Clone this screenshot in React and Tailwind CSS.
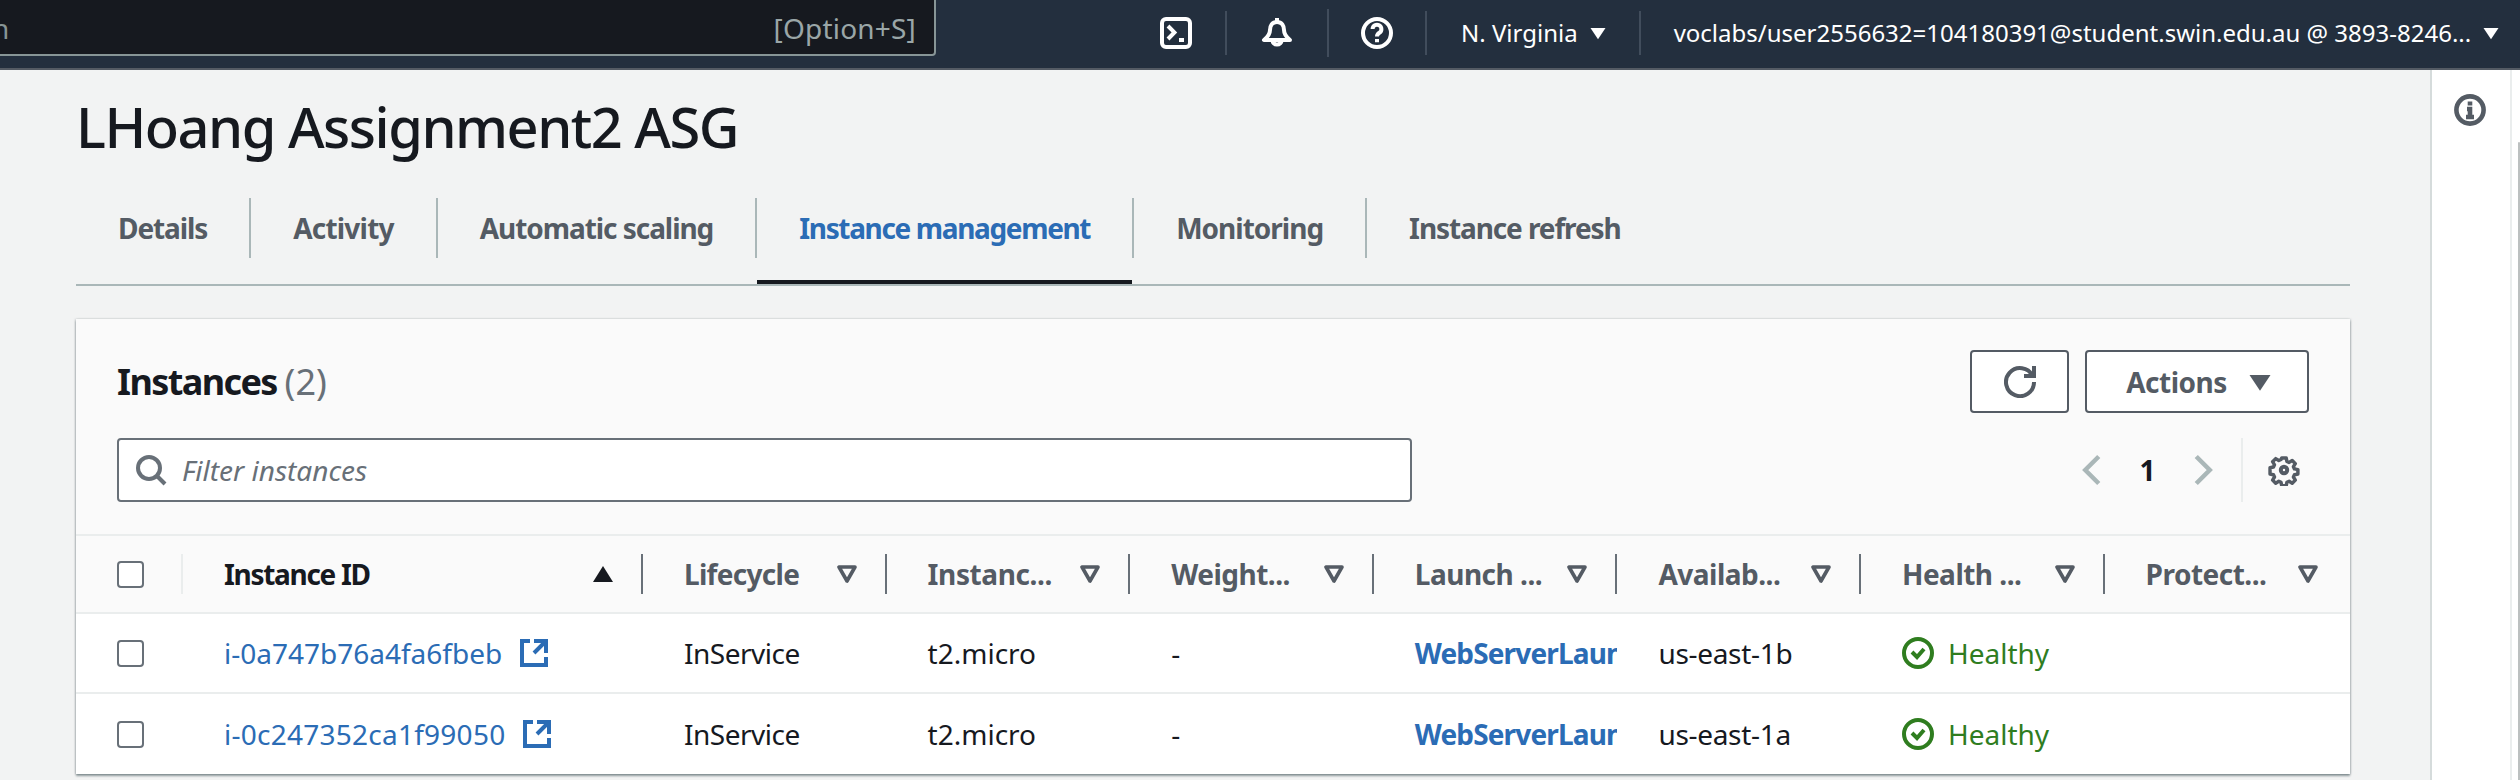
import React from 'react';

const COLUMNS = [
  { label: 'Lifecycle', tracking: 'tracking-[-0.7px]' },
  { label: 'Instanc...', tracking: 'tracking-[-0.4px]' },
  { label: 'Weight...', tracking: 'tracking-[-0.5px]' },
  { label: 'Launch ...', tracking: 'tracking-[-0.5px]' },
  { label: 'Availab...', tracking: 'tracking-[-0.5px]' },
  { label: 'Health ...', tracking: 'tracking-[-0.5px]' },
  { label: 'Protect...', tracking: 'tracking-[-0.5px]' },
];

const ROWS = [
  { id: 'i-0a747b76a4fa6fbeb', zone: 'us-east-1b', tracking: 'tracking-normal' },
  { id: 'i-0c247352ca1f99050', zone: 'us-east-1a', tracking: 'tracking-[0.25px]' },
];

const TABS = [
  { label: 'Details', tracking: 'tracking-[-1.1px]' },
  { label: 'Activity', tracking: 'tracking-[-0.8px]' },
  { label: 'Automatic scaling', tracking: 'tracking-[-1.05px]' },
  { label: 'Instance management', tracking: 'tracking-[-1.35px]', active: true },
  { label: 'Monitoring', tracking: 'tracking-[-1px]' },
  { label: 'Instance refresh', tracking: 'tracking-[-1.1px]' },
];

const Icon = ({ className, children, strokeWidth = 2 }) => (
  <svg viewBox="0 0 16 16" fill="none" stroke="currentColor" strokeWidth={strokeWidth} className={className}>
    {children}
  </svg>
);

const Caret = ({ className }) => (
  <svg viewBox="0 0 16 16" className={className}>
    <path d="M2 4h12l-6 9z" fill="currentColor" />
  </svg>
);

const FilterCaret = () => (
  <svg viewBox="0 0 20 20" className="w-5 h-5 text-[#545b64]" fill="none" stroke="currentColor" strokeWidth="3.6">
    <path d="M2 3h16L10 17z" strokeLinejoin="round" />
  </svg>
);

const Gear = ({ className }) => (
  <Icon className={className}>
    <path
      d="M6.7 1h2.6l.4 2 1.3.6 1.8-1.1 1.8 1.8-1.1 1.8.6 1.3 2 .4v2.6l-2 .4-.6 1.3 1.1 1.8-1.8 1.8-1.8-1.1-1.3.6-.4 2H6.7l-.4-2-1.3-.6-1.8 1.1-1.8-1.8 1.1-1.8-.6-1.3-2-.4V6.7l2-.4.6-1.3-1.1-1.8 1.8-1.8 1.8 1.1 1.3-.6z"
      transform="translate(1.1 1.1) scale(0.86)"
      strokeLinejoin="round"
    />
    <circle cx="8" cy="8" r="1.6" />
  </Icon>
);

const Checkbox = () => <span className="block w-[27px] h-[27px] rounded-[4px] border-2 border-[#687078] bg-white" />;

const HeaderDivider = ({ light }) => (
  <span className={`w-[2px] h-10 shrink-0 ${light ? 'bg-[#eaeded]' : 'bg-[#687078]'}`} />
);

const TopBar = () => (
  <header className="h-[70px] shrink-0 bg-[#232f3e] border-b-2 border-[#545b64] flex items-start text-white">
    <div className="w-[936px] shrink-0 h-[58px] -mt-[2px] pt-[2px] bg-[#16191f] border-2 border-[#879596] border-l-0 rounded-br-[4px] flex items-center justify-between overflow-hidden">
      <span className="text-[28px] text-[#879596] -ml-[8px]">h</span>
      <span className="text-[28px] text-[#9aa6a7] mr-[18px] tracking-[0.2px]">[Option+S]</span>
    </div>
    <div className="flex items-center shrink-0 h-[66px] ml-[224px]">
      <Icon className="w-8 h-8 mr-[33px]">
        <rect x="1" y="1" width="14" height="14" rx="2" />
        <path d="m4 4.5 3.2 3.2L4 11M9.5 11.500H12" />
      </Icon>
      <span className="w-[2px] h-[44px] bg-[#414d5c]" />
      <Icon className="w-8 h-8 mx-[34px]">
        <path d="M8 .500v2" />
        <path d="M8 2.500c-2.500 0-3.500 2-3.500 4 0 2-1 3.400-3 5h13c-2-1.600-3-3-3-5 0-2-1-4-3.500-4z" strokeLinejoin="round" />
        <path d="M5.700 11.500a2.300 2.300 0 1 0 4.600 0" />
      </Icon>
      <span className="w-[2px] h-[48px] bg-[#414d5c]" />
      <Icon className="w-8 h-8 ml-[32px] mr-[32px]">
        <circle cx="8" cy="8" r="7" />
        <path d="M5.800 6a2.200 2.200 0 1 1 3.400 1.900C8.400 8.400 8 8.900 8 9.800M8 11v1.600" />
      </Icon>
      <span className="w-[2px] h-[44px] bg-[#414d5c]" />
      <span className="ml-[34px] text-[24px] leading-none">N. Virginia</span>
      <Caret className="w-5 h-5 ml-[10px] mr-[31px]" />
      <span className="w-[2px] h-[44px] bg-[#414d5c]" />
      <span className="ml-[33px] text-[24px] leading-none whitespace-nowrap">
        voclabs/user2556632=104180391@student.swin.edu.au @ 3893-8246...
      </span>
      <Caret className="w-5 h-5 ml-[10px]" />
    </div>
  </header>
);

const Tabs = () => (
  <nav className="flex h-[88px] border-b-2 border-[#aab7b8] mt-[40px]">
    {TABS.map((tab, i) => (
      <div key={tab.label} className="relative flex items-start h-[86px]">
        <span
          className={`block h-[60px] leading-[60px] text-[28px] font-bold whitespace-nowrap px-[42px] ${tab.tracking} ${
            tab.active ? 'text-[#2b6cb5]' : 'text-[#545b64]'
          } ${i < TABS.length - 1 ? 'border-r-2 border-[#aab7b8]' : ''}`}
        >
          {tab.label}
        </span>
        {tab.active && <span className="absolute left-0 right-[2px] bottom-0 h-1 bg-[#16191f]" />}
      </div>
    ))}
  </nav>
);

const CardHeader = () => (
  <div className="px-[41px] pt-[31px] h-[215px]">
    <div className="flex items-start justify-between h-[88px]">
      <h2 className="text-[36px] leading-[63px] font-bold tracking-[-1.6px] text-[#16191f]">
        Instances <span className="font-normal tracking-normal text-[#687078]">(2)</span>
      </h2>
      <div className="flex gap-4">
        <button className="w-[99px] h-[63px] flex items-center justify-center rounded-[4px] border-2 border-[#545b64] bg-white text-[#545b64]">
          <Icon className="w-8 h-8">
            <path d="M10 5h5V0" />
            <path d="M15 8a7 7 0 1 1-.7-3" />
          </Icon>
        </button>
        <button className="w-[224px] h-[63px] pl-[6px] flex items-center justify-center gap-[19px] rounded-[4px] border-2 border-[#545b64] bg-white text-[#545b64] text-[28px] font-bold tracking-[-0.5px]">
          Actions
          <Caret className="w-7 h-7" />
        </button>
      </div>
    </div>
    <div className="flex items-center">
      <div className="w-[1295px] h-[64px] rounded-[4px] border-2 border-[#687078] bg-white flex items-center pl-4">
        <Icon className="w-8 h-8 text-[#687078]">
          <circle cx="7" cy="7" r="5.500" />
          <path d="m15 15-4-4" />
        </Icon>
        <span className="ml-[15px] text-[28px] italic text-[#687078]">Filter instances</span>
      </div>
      <div className="ml-auto flex items-center h-[64px] pr-[9px]">
        <Icon className="w-9 h-9 text-[#aab7b8]">
          <path d="M11 2 5 8l6 6" />
        </Icon>
        <span className="w-[75px] text-center text-[28px] font-bold text-[#16191f]">1</span>
        <Icon className="w-9 h-9 text-[#aab7b8]">
          <path d="m5 2 6 6-6 6" />
        </Icon>
        <span className="w-[2px] h-[64px] bg-[#eaeded] ml-[20px] mr-[25px]" />
        <Gear className="w-8 h-8 text-[#545b64]" />
      </div>
    </div>
  </div>
);

const TableHead = () => (
  <div className="flex items-center h-[80px] border-y-2 border-[#eaeded] bg-[#fafafa] text-[28px] font-bold text-[#545b64]">
    <div className="w-[107px] shrink-0 flex items-center pl-[41px] justify-between">
      <Checkbox />
      <HeaderDivider light />
    </div>
    <div className="w-[460px] shrink-0 flex items-center justify-between pl-[41px]">
      <span className="text-[#16191f] tracking-[-1.3px]">Instance ID</span>
      <span className="flex items-center gap-[28px]">
        <svg viewBox="0 0 20 20" className="w-5 h-5 text-[#16191f]">
          <path d="M10 2 20 18H0z" fill="currentColor" />
        </svg>
        <HeaderDivider />
      </span>
    </div>
    {COLUMNS.map((col, i) => (
      <div key={col.label} className="w-[243.600px] shrink-0 flex items-center justify-between pl-[41px]">
        <span className={`whitespace-nowrap ${col.tracking}`}>{col.label}</span>
        <span className="flex items-center gap-[28px]">
          <FilterCaret />
          {i < COLUMNS.length - 1 ? <HeaderDivider /> : <span className="w-[2px] h-10" />}
        </span>
      </div>
    ))}
  </div>
);

const TableRow = ({ row, last }) => (
  <div className={`flex items-center text-[28px] text-[#16191f] bg-white ${last ? 'h-[80px]' : 'h-[80px] border-b-2 border-[#eaeded]'}`}>
    <div className="w-[107px] shrink-0 pl-[41px]">
      <Checkbox />
    </div>
    <div className={`w-[460px] shrink-0 flex items-center pl-[41px] text-[#2b6cb5] ${row.tracking}`}>
      {row.id}
      <Icon className="w-8 h-8 ml-[16px]">
        <path d="M14 8V2H8M14 2 8 8M6 2H2v12h12v-4" />
      </Icon>
    </div>
    <div className="w-[243.600px] shrink-0 pl-[41px] tracking-[-0.5px]">InService</div>
    <div className="w-[243.600px] shrink-0 pl-[41px]">t2.micro</div>
    <div className="w-[243.600px] shrink-0 pl-[41px]">-</div>
    <div className="w-[243.600px] shrink-0 pl-[41px] font-bold tracking-[-0.85px] text-[#2b6cb5] overflow-hidden whitespace-nowrap">
      WebServerLaunchTemplate
    </div>
    <div className="w-[243.600px] shrink-0 pl-[41px] tracking-[-0.3px]">{row.zone}</div>
    <div className="w-[243.600px] shrink-0 pl-[41px] flex items-center text-[#2f7d1f]">
      <Icon className="w-8 h-8 mr-[14px]">
        <circle cx="8" cy="8" r="7" />
        <path d="m5 7.500 2.500 2.500 3.500-4" />
      </Icon>
      Healthy
    </div>
    <div className="w-[243.600px] shrink-0" />
  </div>
);

export default function App() {
  return (
    <div className="relative w-[2520px] h-[780px] overflow-hidden flex flex-col bg-[#f2f3f3] font-['Noto_Sans',sans-serif]">
      <TopBar />
      <div className="flex flex-1 min-h-0">
        <main className="flex-1 pl-[76px] pr-[80px] min-w-0">
          <h1 className="mt-[25px] h-[63px] text-[56px] leading-[63px] font-medium tracking-[-1.5px] text-[#16191f]">LHoang Assignment2 ASG</h1>
          <Tabs />
          <section className="mt-[33px] bg-[#fafafa] shadow-[0_2px_2px_rgba(0,28,36,0.4),1px_0_2px_rgba(0,28,36,0.15),-1px_0_2px_rgba(0,28,36,0.15)]">
            <CardHeader />
            <TableHead />
            {ROWS.map((row, i) => (
              <TableRow key={row.id} row={row} last={i === ROWS.length - 1} />
            ))}
          </section>
        </main>
        <aside className="w-[90px] shrink-0 bg-white">
          <div className="w-[82px] h-full border-l-2 border-r-2 border-l-[#d5dbdb] border-r-[#eaeded] pt-[24px] pl-[22px]">
            <Icon className="w-8 h-8 text-[#545b64]" strokeWidth={2.3}>
              <circle cx="8" cy="8" r="6.800" />
              <path d="M8 11.500V7.500H6.500M6 11.500h4M8 3.800v2" />
            </Icon>
          </div>
        </aside>
      </div>
      {/* scrollbar sliver at the window edge */}
      <span className="absolute right-0 top-[142px] bottom-0 w-[2px] rounded-t-[2px] bg-[#bcc0c0]" />
    </div>
  );
}
